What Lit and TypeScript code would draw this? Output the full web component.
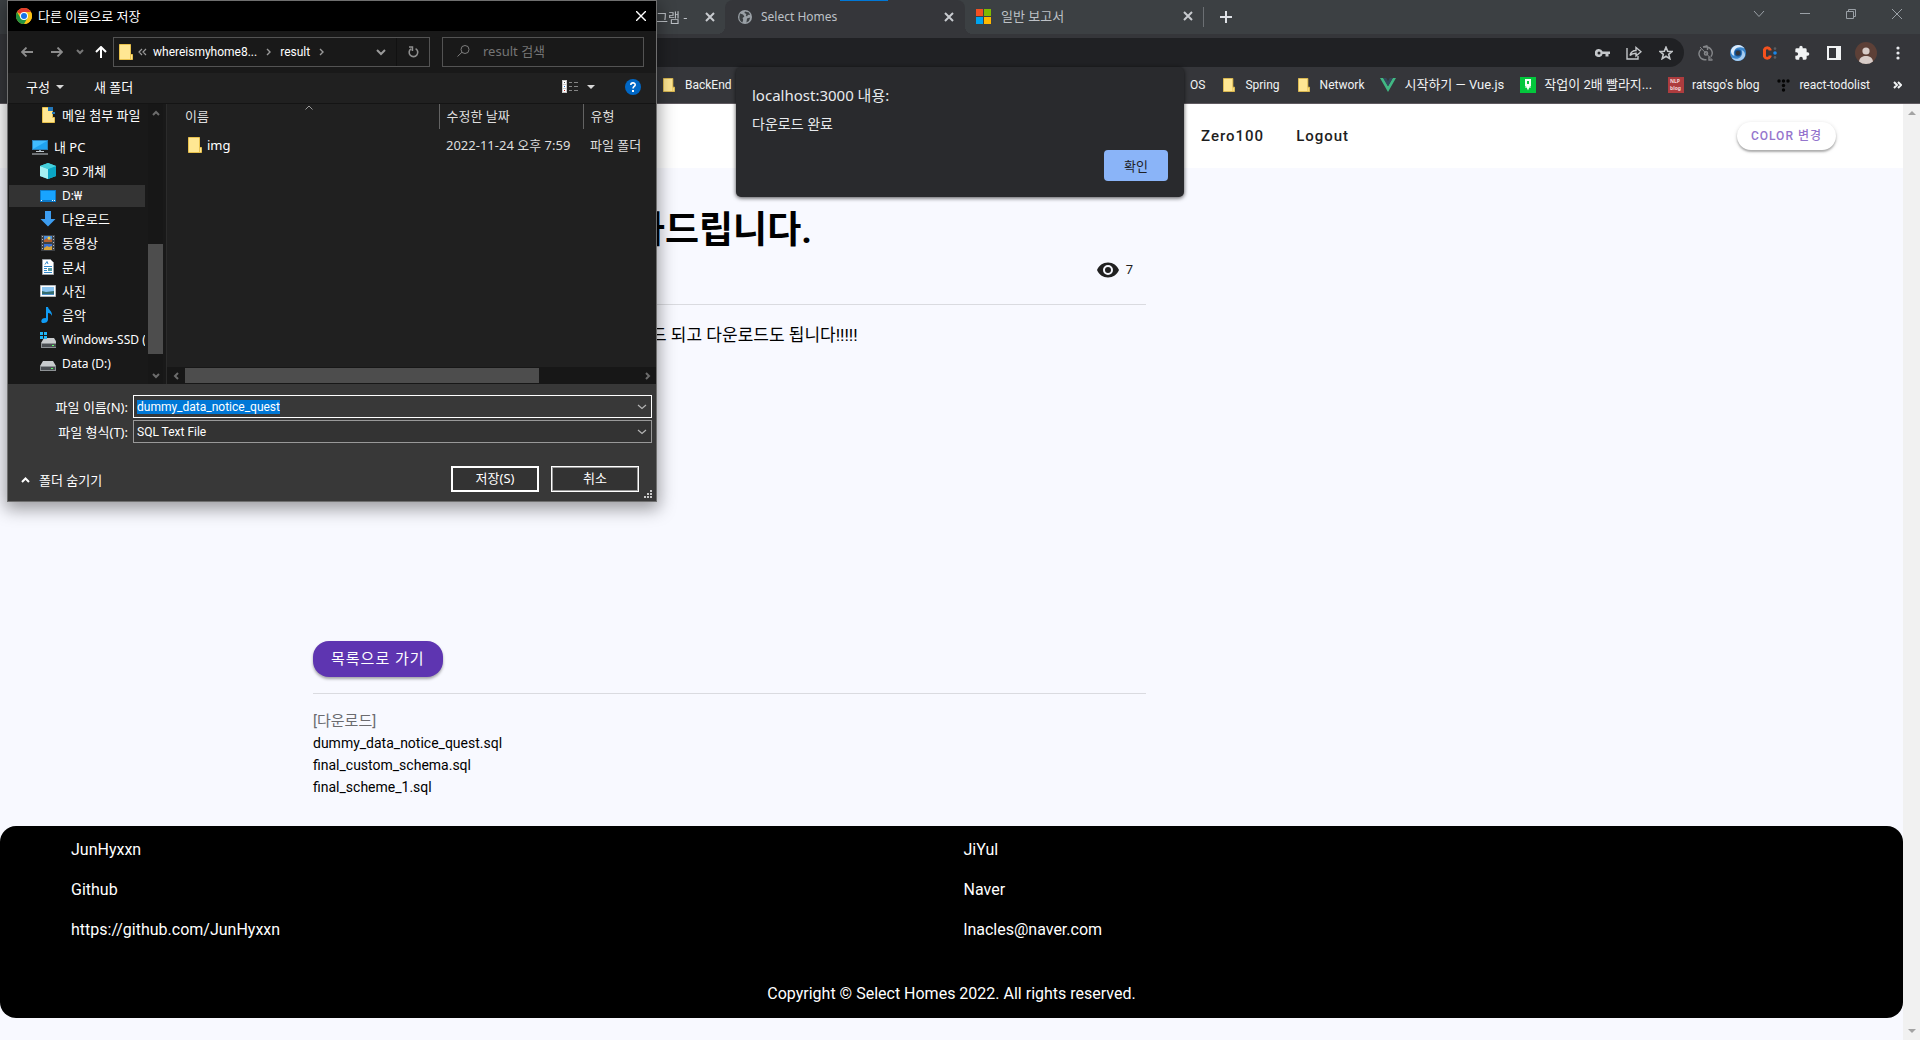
import { LitElement, html, css, svg, TemplateResult } from "lit";
import { customElement, query } from "lit/decorators.js";
import { classMap } from "lit/directives/class-map.js";

type Icon = TemplateResult;

const hasHangul = (text: string) => /[가-힣]/.test(text);

/* ---------- shared icons ---------- */

const folderAt = (w: number, h: number) => html`<svg class="ico" width=${w} height=${h} viewBox="0 0 14 16" preserveAspectRatio="none" aria-hidden="true">
  <path d="M0.5 0.5H11.5V10.5H13.5V15.5H0.5Z" fill="#ffe793" stroke="#e8c14c"/>
  <path d="M11.5 10.5V15.5" stroke="#e8c14c"/></svg>`;

const folder = folderAt(14, 16);

const stroke = (w: number, h: number, d: string, width = 1, cls = "") => html`<svg
  class="ico ${cls}" width=${w} height=${h} viewBox="0 0 ${w} ${h}" fill="none" stroke="currentColor"
  stroke-width=${width} aria-hidden="true"><path d=${d}/></svg>`;

const chromeLogo = html`<svg class="ico" width="16" height="16" viewBox="0 0 48 48" aria-hidden="true">
  <circle cx="24" cy="24" r="24" fill="#fbc116"/>
  <path d="M24 24L3.2 12A24 24 0 0 1 44.8 12Z" fill="#e33b2e"/>
  <path d="M24 12H44.8A24 24 0 0 1 24 48L34.4 30Z" fill="#fbc116"/>
  <path d="M3.2 12L13.6 30L24 24L34.4 30L24 48A24 24 0 0 1 3.2 12Z" fill="#229342"/>
  <circle cx="24" cy="24" r="12" fill="#fff"/><circle cx="24" cy="24" r="9" fill="#1a73e8"/></svg>`;

const globe = html`<svg class="ico" width="14" height="14" viewBox="0 0 14 14" aria-hidden="true">
  <circle cx="7" cy="7" r="7" fill="#9aa0a6"/>
  <path d="M2 3.4L5 4.6L6.4 6.6L4.6 8L5.2 10L4.4 12.4A6 6 0 0 1 1.4 6.4Z M7 1.4L11 2.6L12 5L10 4.8L9 6.6L7.8 5.6L8.4 4L6.4 3Z M9 8.4L12.2 7.6L11 11L8.4 12.4Z" fill="#3c4043"/></svg>`;

const msLogo = html`<svg class="ico" width="15" height="15" viewBox="0 0 15 15" aria-hidden="true">
  <path d="M0 0H7V7H0Z" fill="#f25022"/><path d="M8 0H15V7H8Z" fill="#7fba00"/>
  <path d="M0 8H7V15H0Z" fill="#00a4ef"/><path d="M8 8H15V15H8Z" fill="#ffb900"/></svg>`;

const bigX = stroke(10, 10, "M1 1L9 9M9 1L1 9", 2);

/* ---------- browser frame ---------- */

const bookmarkIcons: Record<string, Icon> = {
  folder: folderAt(12, 14),
  vue: html`<svg class="ico" width="16" height="14" viewBox="0 0 16 14" aria-hidden="true">
    <path d="M0 0H3.2L8 8.3L12.8 0H16L8 14Z" fill="#41b883"/>
    <path d="M3.2 0H6.2L8 3.2L9.8 0H12.8L8 8.3Z" fill="#35495e"/></svg>`,
  naver: html`<svg class="ico" width="16" height="16" viewBox="0 0 16 16" aria-hidden="true">
    <path d="M0 0H16V16H0Z" fill="#03c73c"/>
    <path d="M5 2H11V9H10L8 13.6L6 9H5Z" fill="#f4fff6"/><path d="M7 4H9V7H7Z" fill="#03c73c"/>
    <path d="M5 10H11" stroke="#f4fff6"/></svg>`,
  nlp: html`<svg class="ico" width="16" height="16" viewBox="0 0 16 16" aria-hidden="true">
    <path d="M0 0H16V16H0Z" fill="#ad3c3e"/>
    <text x="2" y="6" font-size="5" font-weight="700" font-family="Noto Sans, sans-serif" fill="#f3dada">NLP</text>
    <text x="2" y="13" font-size="5" font-weight="700" font-family="Noto Sans, sans-serif" fill="#f3dada">blog</text></svg>`,
  tistory: html`<svg class="ico" width="13" height="13" viewBox="0 0 13 13" fill="#050505" aria-hidden="true">
    <circle cx="2" cy="2" r="1.7"/><circle cx="6.5" cy="2" r="1.7"/><circle cx="11" cy="2" r="1.7"/>
    <circle cx="6.5" cy="6.5" r="1.7"/><circle cx="6.5" cy="11" r="1.7"/></svg>`,
};

@customElement("browser-frame")
class BrowserFrame extends LitElement {
  static styles = css`
    :host { display: block; color: #dee1e6; background: #35363a; border-bottom: 1px solid #5f5a60;
      font: 12px/16px "Noto Sans", "Noto Sans CJK KR", sans-serif; }
    .ico { display: block; flex: none; }
    button { display: flex; align-items: center; justify-content: center; padding: 0; border: 0;
      background: none; color: inherit; font: inherit; }
    .tabs { display: flex; height: 34px; background: #3c4043; padding-left: 640px; }
    .tab { display: flex; align-items: center; box-sizing: border-box; padding: 0 11px 1px; color: #bdc1c6; }
    .tab .name { flex: 1; white-space: nowrap; overflow: hidden; }
    .tab .close { width: 10px; height: 16px; color: #c8cbcf; }
    .prev { width: 85px; padding: 0 10px 1px 4px; font-size: 13px; }
    .prev .name { -webkit-mask-image: linear-gradient(90deg, #000 70%, transparent); }
    .active { position: relative; width: 240px; gap: 9px; padding-left: 13px; background: #35363a; border-radius: 8px 8px 0 0; }
    .active::before, .active::after { content: ""; position: absolute; bottom: 0; width: 8px; height: 8px; }
    .active::before { right: 100%; background: radial-gradient(circle at 0 0, transparent 8px, #35363a 8px); }
    .active::after { left: 100%; background: radial-gradient(circle at 100% 0, transparent 8px, #35363a 8px); }
    .active .load { position: absolute; top: 0; right: 77px; width: 48px; height: 1px; background: #0078d7; }
    .last { width: 238px; gap: 10px; padding: 0 10px 2px 11px; font-size: 13px; }
    .sep { width: 1px; height: 20px; margin: 7px 16px 0 0; background: #6b6f73; }
    .win { display: flex; margin-left: auto; color: #9aa0a6; }
    .win button { width: 46px; height: 28px; }
    .bar { display: flex; align-items: center; padding: 4px 10px 4px 120px; }
    .omni { display: flex; align-items: center; flex: 1; height: 29px; padding-right: 8px; gap: 12px;
      border-radius: 15px; background: #202124; color: #c4c7ca; }
    .omni input { flex: 1; border: 0; background: none; outline: 0; color: inherit; }
    .omni button { width: 20px; height: 20px; }
    .exts { display: flex; gap: 8px; margin-left: 10px; }
    .exts button { width: 24px; height: 24px; }
    .marks { display: flex; align-items: center; box-sizing: border-box; height: 32px; padding: 0 18px 4px 661px; color: #f1f3f4;
      font-family: Roboto, "Noto Sans CJK KR", sans-serif; }
    .marks a { display: flex; align-items: center; gap: 8px; color: inherit; text-decoration: none; white-space: nowrap; }
    .marks .ko { font-size: 13px; }
    .marks .fav { display: flex; justify-content: center; width: 16px; }
    .right { display: flex; align-items: center; gap: 16px; margin-left: auto; }
    .more { margin-left: 7px; }
  `;

  private marks = [
    ["", "OS"], ["folder", "Spring"], ["folder", "Network"], ["vue", "시작하기 — Vue.js"],
    ["naver", "작업이 2배 빨라지..."], ["nlp", "ratsgo's blog"], ["tistory", "react-todolist"],
  ];

  private mark(icon: string, name: string) {
    return html`<a href="#" class=${classMap({ ko: hasHangul(name) })}>${icon ? html`<span class="fav">${bookmarkIcons[icon]}</span>` : ""}${name}</a>`;
  }

  render() {
    return html`
      <div class="tabs" role="tablist">
        <div class="tab prev" role="tab"><span class="name">타그램 -</span><button class="close" aria-label="탭 닫기">${bigX}</button></div>
        <div class="tab active" role="tab" aria-selected="true"><i class="load"></i>${globe}<span class="name">Select Homes</span><button class="close" aria-label="탭 닫기">${bigX}</button></div>
        <div class="tab last" role="tab">${msLogo}<span class="name">일반 보고서</span><button class="close" aria-label="탭 닫기">${bigX}</button></div>
        <i class="sep"></i>
        <button aria-label="새 탭">${stroke(12, 12, "M6 0V12M0 6H12", 2)}</button>
        <div class="win">
          <button aria-label="탭 검색">${stroke(12, 8, "M1 1L6 6.5L11 1")}</button>
          <button aria-label="최소화">${stroke(10, 2, "M0 0.5H10")}</button>
          <button aria-label="이전 크기로">${stroke(10, 10, "M0.5 2.5H7.5V9.5H0.5ZM2.5 2.5V0.5H9.5V7.5H7.5")}</button>
          <button aria-label="닫기">${stroke(10, 10, "M0 0L10 10M10 0L0 10")}</button>
        </div>
      </div>
      <div class="bar">
        <div class="omni">
          <input aria-label="주소창">
          <button aria-label="비밀번호"><svg class="ico" width="15" height="8" viewBox="0 0 15 8" aria-hidden="true">
            <path fill="currentColor" fill-rule="evenodd" d="M4 0A4 4 0 0 1 7.6 2.5H15V5H13.5V7.5H10.5V5H7.6A4 4 0 1 1 4 0ZM4 2.5A1.5 1.5 0 1 0 4 5.5A1.5 1.5 0 0 0 4 2.5Z"/></svg></button>
          <button aria-label="공유">${stroke(16, 14, "M1 2V13H12V10M4 9.5C5 5.5 7 4.5 10 4.5V1.5L15 5.8L10 10V7.2C7.5 7.2 5.5 7.8 4 9.5Z", 1.4)}</button>
          <button aria-label="북마크">${stroke(14, 14, "M7 1.2L8.7 5.3L13 5.6L9.7 8.4L10.8 12.7L7 10.3L3.2 12.7L4.3 8.4L1 5.6L5.3 5.3Z", 1.6)}</button>
        </div>
        <div class="exts">
          <button aria-label="동기화"><svg class="ico" width="16" height="16" viewBox="0 0 16 16" fill="none" stroke="#85878a" stroke-width="1.4" aria-hidden="true">
            <path d="M3.2 4.2A6 6 0 0 0 8.5 14.6M12.8 11.8A6 6 0 0 0 7 2.1M5 2L9.5 0.8M5 2H9.5V5M14.5 15H11V11.5"/><circle cx="8" cy="8.4" r="1.6"/><path d="M2 2L14 14.6" stroke-width="1"/></svg></button>
          <button aria-label="확장 프로그램 1"><svg class="ico" width="16" height="16" viewBox="0 0 16 16" aria-hidden="true">
            <circle cx="8" cy="8" r="8" fill="#3b86cc"/>
            <path d="M1 5A8 8 0 0 1 8 0C11 0 13 1.4 14.4 3.4C11 1.6 7 2 5 4.6C3.4 6.8 3.6 9 4.4 11C1.6 10 0.6 7.4 1 5Z" fill="#dcebfa"/>
            <path d="M15 11A8 8 0 0 1 8 16C5 16 3 14.6 1.6 12.6C5 14.4 9 14 11 11.4C12.6 9.2 12.4 7 11.6 5C14.4 6 15.4 8.6 15 11Z" fill="#a8cdf0"/>
            <circle cx="8" cy="8" r="3.4" fill="#174e8c"/><circle cx="8" cy="8" r="2.2" fill="#35363a"/></svg></button>
          <button aria-label="확장 프로그램 2"><svg class="ico" width="16" height="16" viewBox="0 0 16 16" fill="none" aria-hidden="true">
            <path d="M8 5.5V4.5A3 3 0 0 0 2.5 4.5V11.5A3 3 0 0 0 8 11.5V10.5" stroke="#f4511e" stroke-width="3"/>
            <circle cx="13" cy="8" r="1.8" fill="#1a86e8"/><circle cx="13" cy="3.6" r="1.3" fill="#5a5d61"/><circle cx="13" cy="12.4" r="1.3" fill="#5a5d61"/></svg></button>
          <button aria-label="확장 프로그램"><svg class="ico" width="16" height="16" viewBox="0 0 24 24" fill="#f1f3f4" aria-hidden="true">
            <path d="M20.5 11H19V7a2 2 0 0 0-2-2h-4V3.5a2.5 2.5 0 0 0-5 0V5H4a2 2 0 0 0-2 2v3.8h1.5a2.7 2.7 0 0 1 0 5.4H2V20a2 2 0 0 0 2 2h3.8v-1.5a2.7 2.7 0 0 1 5.4 0V22H17a2 2 0 0 0 2-2v-4h1.5a2.5 2.5 0 0 0 0-5z"/></svg></button>
          <button aria-label="측면 패널"><svg class="ico" width="14" height="14" viewBox="0 0 14 14" aria-hidden="true">
            <path fill="#f1f3f4" fill-rule="evenodd" d="M0 0H14V14H0ZM2 2V12H9V2Z"/></svg></button>
          <button aria-label="프로필"><svg class="ico" width="22" height="22" viewBox="0 0 22 22" aria-hidden="true">
            <circle cx="11" cy="11" r="11" fill="#5d4037"/><circle cx="11" cy="9" r="3.6" fill="#d7ccc8"/>
            <path d="M4 19.4C4.4 15.8 7.6 14 11 14S17.6 15.8 18 19.4A11 11 0 0 1 4 19.4Z" fill="#d7ccc8"/></svg></button>
          <button aria-label="메뉴"><svg class="ico" width="4" height="14" viewBox="0 0 4 14" fill="#e8eaed" aria-hidden="true">
            <circle cx="2" cy="2" r="1.6"/><circle cx="2" cy="7" r="1.6"/><circle cx="2" cy="12" r="1.6"/></svg></button>
        </div>
      </div>
      <nav class="marks" aria-label="북마크">
        ${this.mark("folder", "BackEnd")}
        <div class="right">
          ${this.marks.map(([icon, name]) => this.mark(icon, name))}
          <button class="more" aria-label="북마크 더보기">${stroke(9, 8, "M1 1L4 4L1 7M5 1L8 4L5 7", 2)}</button>
        </div>
      </nav>`;
  }
}

/* ---------- the Select Homes page ---------- */

@customElement("notice-page")
class NoticePage extends LitElement {
  static styles = css`
    :host { display: flex; flex: 1; background: #f8f9ff; color: #000;
      font: 16px/24px Roboto, "Noto Sans CJK KR", sans-serif; }
    .page { flex: 1; min-width: 0; }
    a { color: inherit; text-decoration: none; }
    .top { display: flex; align-items: center; height: 64px; padding: 0 67px 0 1201px; background: #fff; }
    .top nav { display: flex; gap: 32px; font-size: 15px; font-weight: 500; letter-spacing: 1px; color: #1e1e1e; }
    .color { height: 28px; margin-left: auto; padding: 0 14px; border: 0; border-radius: 14px; background: #fff;
      color: #9575cd; font: 500 12px/28px Roboto, "Noto Sans CJK KR", sans-serif; letter-spacing: 1px;
      box-shadow: 0 2px 2px rgba(0,0,0,.25), 0 1px 4px rgba(0,0,0,.15); }
    article { width: 44%; max-width: 833px; margin-left: 313px; }
    h1 { margin: 0; padding: 36px 0 0 318px; font-size: 37px; line-height: 54px; font-weight: 700; white-space: nowrap; }
    .views { display: flex; justify-content: flex-end; align-items: center; gap: 6px; height: 24px; padding-right: 13px;
      font-size: 13px; color: #212121; }
    .views svg { display: block; }
    hr { margin: 0; border: 0; border-top: 1px solid #dadbe0; }
    .views + hr { margin-top: 22px; }
    .text { min-height: 320px; margin: 0; padding: 16px 0 0 338px; font-size: 17px; line-height: 28px; box-sizing: border-box; white-space: nowrap; }
    .list { display: block; height: 36px; margin: 16px 0; padding: 0 18px; border: 0; border-radius: 16px; background: #5e35b1;
      color: #fff; font: 15px/36px Roboto, "Noto Sans CJK KR", sans-serif; letter-spacing: 1px;
      box-shadow: 0 2px 3px rgba(0,0,0,.35); }
    .label { margin: 16px 0 0; font-size: 15px; line-height: 22px; color: #6b6b6f; }
    ul { margin: 0; padding: 0 0 28px; list-style: none; font-size: 14px; line-height: 22px; }
    footer { border-radius: 16px; background: #000; color: #fff; padding: 12px 59px; }
    .cols { display: grid; grid-template-columns: 1fr 1fr; }
    .cols div { display: flex; flex-direction: column; gap: 16px; padding: 0 12px; }
    .copy { margin: 40px 0 0; text-align: center; line-height: 24px; }
    .rail { display: flex; flex-direction: column; justify-content: space-between; align-items: center;
      width: 17px; box-sizing: border-box; padding: 6px 0; background: #f1f1f1; color: #a3a3a3; }
  `;

  render() {
    return html`
      <div class="page">
        <header class="top">
          <nav><a href="#">Zero100</a><a href="#">Logout</a></nav>
          <button class="color">COLOR 변경</button>
        </header>
        <article>
          <h1>가드립니다.</h1>
          <div class="views">
            <svg width="24" height="24" viewBox="0 0 24 24" fill="#212121" aria-hidden="true"><path d="M12,9A3,3 0 0,0 9,12A3,3 0 0,0 12,15A3,3 0 0,0 15,12A3,3 0 0,0 12,9M12,17A5,5 0 0,1 7,12A5,5 0 0,1 12,7A5,5 0 0,1 17,12A5,5 0 0,1 12,17M12,4.5C7,4.5 2.73,7.61 1,12C2.73,16.39 7,19.5 12,19.5C17,19.5 21.27,16.39 23,12C21.27,7.61 17,4.5 12,4.5Z"/></svg>
            <span>7</span>
          </div>
          <hr>
          <p class="text">드 되고 다운로드도 됩니다!!!!!</p>
          <button class="list">목록으로 가기</button>
          <hr>
          <p class="label">[다운로드]</p>
          <ul>
            ${["dummy_data_notice_quest.sql", "final_custom_schema.sql", "final_scheme_1.sql"].map(f => html`<li><a href="#">${f}</a></li>`)}
          </ul>
        </article>
        <footer>
          <div class="cols">
            <div><span>JunHyxxn</span><span>Github</span><a href="#">https://github.com/JunHyxxn</a></div>
            <div><span>JiYul</span><span>Naver</span><a href="#">lnacles@naver.com</a></div>
          </div>
          <p class="copy">Copyright © Select Homes 2022. All rights reserved.</p>
        </footer>
      </div>
      <div class="rail" aria-hidden="true">
        <svg width="8" height="6" viewBox="0 0 8 6" fill="currentColor"><path d="M4 1L8 5H0Z"/></svg>
        <svg width="8" height="6" viewBox="0 0 8 6" fill="currentColor"><path d="M4 5L0 1H8Z"/></svg>
      </div>`;
  }
}

/* ---------- alert ---------- */

@customElement("page-alert")
class PageAlert extends LitElement {
  static styles = css`
    :host { display: block; box-sizing: border-box; width: 448px; padding: 16px; border-radius: 5px;
      background: #292a2d; color: #e8eaed; box-shadow: 0 1px 4px rgba(0,0,0,.7);
      font: 14px/20px "Noto Sans", "Noto Sans CJK KR", sans-serif; }
    h2 { margin: 0; font-size: 15px; line-height: 24px; font-weight: 400; }
    p { margin: 7px 0 16px; line-height: 20px; }
    button { display: block; width: 64px; height: 31px; margin-left: auto; border: 0; border-radius: 4px;
      background: #8ab4f8; color: #202124; font: 13px/31px "Noto Sans", "Noto Sans CJK KR", sans-serif; }
  `;
  render() {
    return html`<div role="alertdialog" aria-labelledby="t" aria-describedby="m">
      <h2 id="t">localhost:3000 내용:</h2><p id="m">다운로드 완료</p><button>확인</button></div>`;
  }
}

/* ---------- save dialog ---------- */

const drive = svg`<path d="M3 4H13L16 9H0Z" fill="#c9ccce"/><path d="M0 9H16V14H0Z" fill="#8d9194"/><path d="M1 10H15V13H1Z" fill="#4a4e52"/><path d="M11 11H13V12H11Z" fill="#5dff6a"/>`;

const small = (body: unknown) => html`<svg class="ico" width="16" height="16" viewBox="0 0 16 16" aria-hidden="true">${body}</svg>`;

const places: { name: string; icon: Icon; kind?: string }[] = [
  { name: "메일 첨부 파일", kind: "mail", icon: small(svg`<path d="M2.5 0.5H12.5V10.5H14.5V15.5H2.5Z" fill="#ffe793" stroke="#e8c14c"/><path d="M8 0H13V4H8ZM12 5H15V7H12Z" fill="#2377b9"/>`) },
  { name: "내 PC", kind: "root", icon: small(svg`<path d="M0 1H16V11H0Z" fill="#2a7fb8"/><path d="M1 2H15V10H1Z" fill="#41bcff"/><path d="M1 10L15 2V10Z" fill="#1fa2f0"/><path d="M7 11H9V13H7Z" fill="#8aa0ae"/><path d="M4 12.5H12M0 15H16" stroke="#c4ccd2"/>`) },
  { name: "3D 개체", icon: small(svg`<path d="M8 0L16 3V13L8 16L0 13V3Z" fill="#35c5d8"/><path d="M0 3L8 6V16L0 13Z" fill="#a5f0f2"/><path d="M8 6L16 3V13L8 16Z" fill="#0aa5c4"/><path d="M0 3L8 0L16 3L8 6Z" fill="#46d0dc"/>`) },
  { name: "D:₩", kind: "on", icon: small(svg`<path d="M0 2H16V14H0Z" fill="#0c79c8"/><path d="M1 3H15V12H1Z" fill="#18a4ff"/><path d="M1 12.5H2M12 12.5H13M14 12.5H15" stroke="#fff"/>`) },
  { name: "다운로드", icon: small(svg`<path d="M5 0H11V8H15.5L8 15.5L0.5 8H5Z" fill="#3d9df0"/>`) },
  { name: "동영상", icon: small(svg`<path d="M1 0H15V16H1Z" fill="#3f4246"/><path d="M4 1H12V7H4Z" fill="#4a8fe0"/><path d="M4 5L7 3L9 5L12 4V7H4Z" fill="#b5622f"/><path d="M4 9H12V15H4Z" fill="#3a6fd0"/><path d="M4 13L7 11L9 12L12 11V15H4Z" fill="#d9a53a"/><circle cx="9" cy="3" r="1.5" fill="#f5cf3d"/><path d="M2.5 1V15M13.5 1V15" stroke="#b9bcc0" stroke-dasharray="1 2"/>`) },
  { name: "문서", icon: small(svg`<path d="M2.5 0.5H10.5L13.5 3.5V15.5H2.5Z" fill="#fff" stroke="#9aa0a6"/><path d="M5 5.5L7 2.5L8 5M4 7.5H12M4 9.5H7M4 11.5H7M4 13.5H12" stroke="#2f86c9" fill="none"/><path d="M8 9H12V12H8Z" fill="#58a0a8"/>`) },
  { name: "사진", icon: small(svg`<path d="M0.5 2.5H15.5V13.5H0.5Z" fill="#fff" stroke="#b5b9bc"/><path d="M2 4H14V12H2Z" fill="#8cc6f2"/><path d="M2 8L6 9L14 8V12H2Z" fill="#356d6f"/><path d="M2 11H14V12H2Z" fill="#4b8ec9"/>`) },
  { name: "음악", icon: small(svg`<path d="M6 0H8C8.4 3 12.6 4 12 9C11.4 7 10 6.2 8 6V12.4C8 14.6 5.8 16 3.6 16C1.6 16 1 14.8 1.4 13.4C2 11.6 4.2 10.8 6 11.2Z" fill="#109cf5"/>`) },
  { name: "Windows-SSD (", icon: small(svg`<g transform="translate(1 2)">${drive}</g><path d="M0 0H3V3H0ZM4 0H7V3H4ZM0 4H3V7H0ZM4 4H7V7H4Z" fill="#20b5f5"/>`) },
  { name: "Data (D:)", icon: small(svg`<g transform="translate(0 1)">${drive}</g>`) },
];

const tri = html`<svg class="ico" width="8" height="4" viewBox="0 0 8 4" fill="#d8d8d8" aria-hidden="true"><path d="M0 0H8L4 4Z"/></svg>`;
const chevR = stroke(5, 8, "M1 1L4 4L1 7", 1.4);
const chevField = stroke(10, 6, "M1 1L5 4.5L9 1", 1.2);

@customElement("save-dialog")
class SaveDialog extends LitElement {
  @query("#fname") private nameBox!: HTMLInputElement;

  firstUpdated() {
    this.nameBox.focus();
    this.nameBox.select();
  }

  static styles = css`
    :host { display: block; box-sizing: border-box; width: 650px; border: 1px solid #6f6f6f; background: #383838; color: #fff;
      font: 13px/16px "Noto Sans", "Noto Sans CJK KR", sans-serif; box-shadow: 0 5px 16px 2px rgba(0,0,0,.38); }
    .ico { display: block; flex: none; }
    button { display: flex; align-items: center; justify-content: center; gap: 6px; padding: 0; border: 0; background: none; color: inherit; font: inherit; }
    .title { display: flex; align-items: center; gap: 6px; height: 30px; padding: 0 10px 0 8px; box-sizing: border-box; background: #000; }
    .title h1 { flex: 1; margin: 0; font-size: 13px; line-height: 18px; font-weight: 400; }
    .nav { display: flex; align-items: center; height: 42px; padding: 0 12px 0 11px; background: #191919; box-sizing: border-box; }
    .nav > button { height: 30px; }
    .back, .fwd { width: 16px; color: #8c8c8c; }
    .fwd { margin-left: 14px; }
    .hist { width: 10px; margin-left: 10px; color: #777; }
    .up { width: 14px; margin: 0 5px 0 9px; }
    .path { display: flex; align-items: center; box-sizing: border-box; flex: 1; height: 30px; border: 1px solid #535353; padding-left: 5px; color: #999; }
    .crumb { padding: 0 9px; color: #fff; font: 12px/16px Roboto, sans-serif; }
    .crumb.first { padding-left: 4px; }
    .path .drop { width: 32px; height: 28px; margin-left: auto; border-right: 1px solid #111; }
    .path .re { width: 32px; height: 28px; }
    .search { display: flex; align-items: center; box-sizing: border-box; gap: 13px; width: 202px; height: 30px; margin-left: 12px;
      padding: 0 14px 2px; border: 1px solid #535353; color: #7d7d7d; }
    .search input { width: 100%; min-width: 0; padding: 0; border: 0; outline: 0; background: none; color: #7d7d7d; font: inherit; }
    .search input::placeholder { color: #757575; opacity: 1; }
    .tools { display: flex; align-items: center; box-sizing: border-box; height: 31px; padding: 0 15px 2px 18px; background: #202020; border-bottom: 1px solid #141414; }
    .tools .new { margin: 0 auto 0 30px; }
    .tools .view { gap: 9px; margin-right: 30px; }
    .main { display: flex; height: 280px; }
    .side { width: 140px; box-sizing: border-box; overflow: hidden; background: #191919; }
    .side ul { margin: 0; padding: 1px 0 0; list-style: none; }
    .side li { display: flex; align-items: center; gap: 6px; box-sizing: border-box; height: 22px; margin: 0 3px 2px 1px; padding-left: 31px;
      white-space: nowrap; overflow: hidden; font-size: 12px; }
    .side li.ko { padding-bottom: 2px; font-size: 13px; }
    .side li.mail { margin-bottom: 10px; }
    .side li.root { padding-left: 23px; }
    .side li.on { background: #333; }
    .vbar { display: flex; flex-direction: column; align-items: center; width: 15px; box-sizing: border-box; padding: 6px 0 5px; background: #171717; color: #6c6c6c; }
    .vbar i { width: 15px; height: 110px; margin: auto 0 19px; background: #4d4d4d; }
    .split { width: 4px; border-right: 1px solid #2b2b2b; background: #191919; box-sizing: border-box; }
    .files { display: flex; flex-direction: column; flex: 1; min-width: 0; background: #202020; }
    table { width: 100%; border-collapse: collapse; table-layout: fixed; }
    th, td { box-sizing: border-box; padding: 0 0 2px 7px; text-align: left; font-weight: 400; white-space: nowrap; color: #dedede; }
    th { height: 25px; border-left: 1px solid #636363; }
    th:first-child { position: relative; border-left: 0; padding-left: 18px; }
    th .sort { position: absolute; top: 1px; left: 138px; color: #9a9a9a; }
    .c1 { width: 272px; } .c2 { width: 144px; }
    td { height: 34px; }
    td:first-child { padding-left: 21px; }
    .file { display: flex; align-items: center; gap: 5px; color: #fff; }
    .hbar { display: flex; align-items: center; justify-content: space-between; height: 17px; margin-top: auto; padding: 0 5px 0 6px; background: #171717; color: #6c6c6c; }
    .hbar i { width: 354px; height: 15px; margin: 0 auto 0 6px; background: #4d4d4d; }
    form { padding: 11px 4px 9px; background: #383838; }
    .row { display: flex; align-items: center; margin-bottom: 2px; }
    .row label { width: 117px; box-sizing: border-box; text-align: right; padding-right: 1px; }
    .field { display: flex; align-items: center; flex: 1; box-sizing: border-box; height: 23px; margin-left: 4px; padding: 0 4px 0 3px; border: 1px solid #999; background: #333; }
    .field.on { border-color: #fff; background: #383838; }
    .field input, .field select { flex: 1; height: 17px; padding: 0; border: 0; outline: 0; background: none; color: #fff;
      font: 12px/16px Roboto, sans-serif; appearance: none; }
    .field input::selection { background: #0078d7; color: #fff; }
    .field .ico { color: #b5b5b5; }
    .foot { display: flex; align-items: center; height: 26px; margin-top: 23px; padding: 0 13px 0 9px; }
    .hide { gap: 9px; margin-right: auto; padding-top: 2px; }
    .act { width: 88px; height: 26px; box-sizing: border-box; margin-left: 12px; padding-bottom: 2px; border: 2px solid #fff; background: #333; }
    .act.cancel { border: 1px solid #fff; box-shadow: inset 0 0 0 1px #999; }
    .grip { position: absolute; right: 4px; bottom: 3px; }
  `;

  render() {
    return html`<div role="dialog" aria-labelledby="cap">
      <div class="title">${chromeLogo}<h1 id="cap">다른 이름으로 저장</h1>
        <button aria-label="닫기">${stroke(10, 10, "M0 0L10 10M10 0L0 10", 1.4)}</button></div>
      <div class="nav">
        <button class="back" aria-label="뒤로">${stroke(12, 10, "M12 5H1M5.5 0.5L1 5L5.5 9.5", 1.8)}</button>
        <button class="fwd" aria-label="앞으로">${stroke(12, 10, "M0 5H11M6.5 0.5L11 5L6.5 9.5", 1.8)}</button>
        <button class="hist" aria-label="최근 위치">${stroke(8, 6, "M1 1L4 4L7 1", 2)}</button>
        <button class="up" aria-label="위로">${stroke(12, 12, "M6 12V1M1 6L6 1L11 6", 2)}</button>
        <div class="path">${folder}
          <svg class="ico" width="16" height="8" viewBox="-5 0 16 8" fill="none" stroke="currentColor" stroke-width="1.2" aria-hidden="true"><path d="M4 1L1 4L4 7M8 1L5 4L8 7"/></svg>
          <span class="crumb first">whereismyhome8...</span>${chevR}<span class="crumb">result</span>${chevR}
          <button class="drop" aria-label="이전 위치">${stroke(10, 7, "M1 1L5 5L9 1", 2)}</button>
          <button class="re" aria-label="새로 고침"><svg class="ico" width="11" height="12" viewBox="0 0 11 12" fill="none" stroke="#8f8f8f" stroke-width="1.6" aria-hidden="true"><path d="M7.6 2.6A4.3 4.3 0 1 1 3 2.8M1 1H4.4V5"/></svg></button>
        </div>
        <label class="search">${stroke(13, 12, "M0.5 11.5L5 7.2M12 4.5A4 4 0 1 1 4 4.5A4 4 0 1 1 12 4.5Z")}<input placeholder="result 검색" aria-label="result 검색"></label>
      </div>
      <div class="tools">
        <button>구성${tri}</button><button class="new">새 폴더</button>
        <button class="view" aria-label="보기 변경"><svg class="ico" width="16" height="14" viewBox="0 0 16 14" fill="none" aria-hidden="true">
          <path d="M0 0H5V13H0Z" fill="#c9c9c9"/><path d="M1 1H4V4H1ZM1 5H4V8H1ZM1 9H4V12H1Z" fill="#fff"/><path d="M2 2H3V3H2Z" fill="#555"/><path d="M2 6H3V7H2Z" fill="#1e74d0"/><path d="M2 10H3V11H2Z" fill="#c02020"/>
          <path d="M7 2.5H10M12 2.5H16M7 6.5H10M12 6.5H16M7 10.5H10M12 10.5H16" stroke="#848484"/></svg>${tri}</button>
        <button aria-label="도움말"><svg class="ico" width="16" height="16" viewBox="0 0 16 16" aria-hidden="true"><circle cx="8" cy="8" r="8" fill="#0067c5"/>
          <path d="M5.8 6C5.8 3.2 10.2 3.2 10.2 5.8C10.2 7.6 8 7.4 8 9.6" stroke="#fff" stroke-width="1.6" fill="none"/><path d="M7 11H9V13H7Z" fill="#fff"/></svg></button>
      </div>
      <div class="main">
        <nav class="side" aria-label="탐색 창"><ul>
          ${places.map(p => html`<li class=${classMap({ ko: hasHangul(p.name), mail: p.kind === "mail", root: p.kind === "root", on: p.kind === "on" })}>${p.icon}<span>${p.name}</span></li>`)}
        </ul></nav>
        <div class="vbar" aria-hidden="true">${stroke(8, 6, "M1 5L4 2L7 5", 2)}<i></i>${stroke(8, 6, "M1 1L4 4L7 1", 2)}</div>
        <div class="split"></div>
        <div class="files">
          <table>
            <thead><tr><th class="c1">이름<span class="sort">${stroke(8, 5, "M0.5 4.5L4 1L7.5 4.5")}</span></th><th class="c2">수정한 날짜</th><th>유형</th></tr></thead>
            <tbody><tr><td><span class="file">${folder}img</span></td><td>2022-11-24 오후 7:59</td><td>파일 폴더</td></tr></tbody>
          </table>
          <div class="hbar" aria-hidden="true">${stroke(6, 8, "M5 1L2 4L5 7", 2)}<i></i>${stroke(6, 8, "M1 1L4 4L1 7", 2)}</div>
        </div>
      </div>
      <form @submit=${(e: Event) => e.preventDefault()}>
        <div class="row"><label for="fname">파일 이름(N):</label><div class="field on"><input id="fname" value="dummy_data_notice_quest" autocomplete="off" spellcheck="false">${chevField}</div></div>
        <div class="row"><label for="ftype">파일 형식(T):</label><div class="field"><select id="ftype"><option>SQL Text File</option></select>${chevField}</div></div>
        <div class="foot">
          <button type="button" class="hide">${stroke(9, 6, "M1 5L4.5 1.5L8 5", 2)}폴더 숨기기</button>
          <button class="act">저장(S)</button><button type="button" class="act cancel">취소</button>
        </div>
      </form>
      <svg class="grip" width="8" height="8" viewBox="0 0 8 8" fill="#c9c9c9" aria-hidden="true"><path d="M6 0H8V2H6ZM3 3H5V5H3ZM6 3H8V5H6ZM0 6H2V8H0ZM3 6H5V8H3ZM6 6H8V8H6Z"/></svg>
    </div>`;
  }
}

/* ---------- desktop ---------- */

@customElement("app-root")
class AppRoot extends LitElement {
  static styles = css`
    :host { position: relative; display: flex; flex-direction: column; min-height: 100vh; overflow: hidden; }
    page-alert { position: absolute; top: 67px; left: 736px; }
    save-dialog { position: absolute; top: 0; left: 7px; }
  `;
  render() {
    return html`<browser-frame></browser-frame><notice-page></notice-page><page-alert></page-alert><save-dialog></save-dialog>`;
  }
}
